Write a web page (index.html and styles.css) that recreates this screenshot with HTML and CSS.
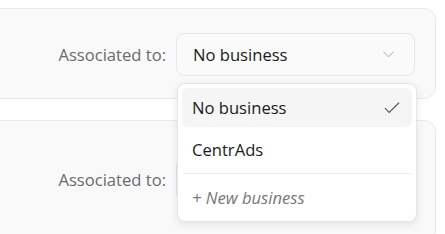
FILE: index.html
```html
<!DOCTYPE html>
<html lang="en">
<head>
<meta charset="utf-8">
<title>Associated to</title>
<link rel="stylesheet" href="styles.css">
</head>
<body>
<div class="page">
  <section class="card card-first">
    <div class="row">
      <span class="label">Associated to:</span>
      <div class="select-wrap">
        <div class="select">
          <span class="select-value">No business</span>
          <svg class="chevron" width="11" height="7" viewBox="0 0 11 7"><polyline points="0.5,0.8 5.5,5.8 10.5,0.8" fill="none" stroke="#a8a8a8" stroke-width="1"/></svg>
        </div>
        <div class="menu">
          <div class="item item-active">
            <span>No business</span>
            <svg class="check" width="16" height="12" viewBox="0 0 16 12"><polyline points="1,6.2 5.2,10.4 15,0.8" fill="none" stroke="#5a5a5a" stroke-width="1.2"/></svg>
          </div>
          <div class="item item-second"><span>CentrAds</span></div>
          <div class="divider"></div>
          <div class="item item-new"><span>+ New business</span></div>
        </div>
      </div>
    </div>
  </section>
  <section class="card card-second">
    <div class="row">
      <span class="label">Associated to:</span>
      <div class="select-wrap">
        <div class="select"></div>
      </div>
    </div>
  </section>
</div>
</body>
</html>
```

FILE: styles.css
```css
html, body {
  margin: 0;
  padding: 0;
  background: #ffffff;
}

body {
  font-family: "Open Sans", "Noto Sans", "Liberation Sans", sans-serif;
  font-size: 16.6px;
  color: #1b1b1b;
  overflow: hidden;
}

.page {
  display: flex;
  flex-direction: column;
  gap: 21px;
  padding: 8px 9px 0 0;
  margin-left: -30px;
}

.card {
  background: #f9f9f9;
  border: 1px solid #e9e9e9;
  border-radius: 12px;
  padding: 24px 20px 22px 20px;
}

.card-second {
  padding-top: 37px;
  padding-bottom: 40px;
}

.row {
  display: flex;
  justify-content: flex-end;
  align-items: center;
  gap: 10px;
}

.label {
  color: #6b6b6b;
}

.select-wrap {
  position: relative;
}

.select {
  box-sizing: border-box;
  width: 239px;
  height: 43px;
  display: flex;
  align-items: center;
  justify-content: space-between;
  padding: 0 20px 0 16px;
  border: 1px solid #e7e7e7;
  border-radius: 8px;
  background: #fafafa;
}

.chevron {
  display: block;
}

.menu {
  position: absolute;
  top: 50px;
  left: 1px;
  box-sizing: border-box;
  width: 240px;
  padding: 4px;
  background: #ffffff;
  border: 1px solid #e6e6e6;
  border-radius: 8px;
  box-shadow: 0 3px 8px rgba(0, 0, 0, 0.09);
  display: flex;
  flex-direction: column;
  z-index: 10;
}

.item {
  height: 39px;
  display: flex;
  align-items: center;
  justify-content: space-between;
  padding: 0 12px 0 10px;
  border-radius: 6px;
}

.item-active {
  background: #f5f5f5;
}

.item-second {
  margin-top: 3px;
}

.divider {
  height: 1px;
  background: #ececec;
  margin: 4px 1px;
}

.item-new {
  color: #777777;
  font-style: italic;
}

.check {
  display: block;
}
```
